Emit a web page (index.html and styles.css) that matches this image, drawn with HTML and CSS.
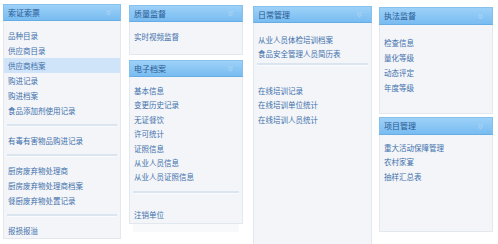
FILE: index.html
```html
<!DOCTYPE html>
<html lang="zh-CN">
<head>
<meta charset="utf-8">
<title>菜单</title>
<link rel="stylesheet" href="styles.css">
</head>
<body>
<div class="board">
  <div class="col c1">
    <section class="panel">
      <div class="hd"><span class="title">索证索票</span><svg class="chev" viewBox="0 0 8 8"><path d="M1.5 1.5L4 3.5L6.5 1.5M1.5 4.5L4 6.5L6.5 4.5"/></svg></div>
      <div class="bd bd1">
        <div class="grp g1">
          <div class="item">品种目录</div>
          <div class="item">供应商目录</div>
          <div class="item active">供应商档案</div>
          <div class="item">购进记录</div>
          <div class="item">购进档案</div>
          <div class="item">食品添加剂使用记录</div>
        </div>
        <div class="sep"></div>
        <div class="grp">
          <div class="item">有毒有害物品购进记录</div>
        </div>
        <div class="sep"></div>
        <div class="grp">
          <div class="item">厨房废弃物处理商</div>
          <div class="item">厨房废弃物处理商档案</div>
          <div class="item">餐厨废弃物处置记录</div>
        </div>
        <div class="sep"></div>
        <div class="grp glast">
          <div class="item">报损报溢</div>
        </div>
      </div>
    </section>
  </div>

  <div class="col c2">
    <section class="panel">
      <div class="hd"><span class="title">质量监督</span><svg class="chev" viewBox="0 0 8 8"><path d="M1.5 1.5L4 3.5L6.5 1.5M1.5 4.5L4 6.5L6.5 4.5"/></svg></div>
      <div class="bd bd2a">
        <div class="grp g1">
          <div class="item">实时视频监督</div>
        </div>
      </div>
    </section>
    <section class="panel panel-next">
      <div class="hd"><span class="title">电子档案</span><svg class="chev" viewBox="0 0 8 8"><path d="M1.5 1.5L4 3.5L6.5 1.5M1.5 4.5L4 6.5L6.5 4.5"/></svg></div>
      <div class="bd bd2b">
        <div class="grp g1 tight">
          <div class="item">基本信息</div>
          <div class="item">变更历史记录</div>
          <div class="item">无证餐饮</div>
          <div class="item">许可统计</div>
          <div class="item">证照信息</div>
          <div class="item">从业人员信息</div>
          <div class="item">从业人员证照信息</div>
        </div>
        <div class="sep"></div>
        <div class="grp gspace tight">
          <div class="item">注销单位</div>
        </div>
      </div>
      <div class="ft"></div>
    </section>
  </div>

  <div class="col c3">
    <section class="panel">
      <div class="hd"><span class="title">日常管理</span><svg class="chev" viewBox="0 0 8 8"><path d="M1.5 1.5L4 3.5L6.5 1.5M1.5 4.5L4 6.5L6.5 4.5"/></svg></div>
      <div class="bd bd3">
        <div class="grp g3 tight">
          <div class="item">从业人员体检培训档案</div>
          <div class="item">食品安全管理人员简历表</div>
        </div>
        <div class="sep"></div>
        <div class="grp gspace2 tight">
          <div class="item">在线培训记录</div>
          <div class="item">在线培训单位统计</div>
          <div class="item">在线培训人员统计</div>
        </div>
      </div>
    </section>
  </div>

  <div class="col c4">
    <section class="panel">
      <div class="hd hd4"><span class="title">执法监督</span><svg class="chev" viewBox="0 0 8 8"><path d="M1.5 1.5L4 3.5L6.5 1.5M1.5 4.5L4 6.5L6.5 4.5"/></svg></div>
      <div class="bd bd4a">
        <div class="grp g4">
          <div class="item">检查信息</div>
          <div class="item">量化等级</div>
          <div class="item">动态评定</div>
          <div class="item">年度等级</div>
        </div>
      </div>
    </section>
    <section class="panel panel-next4">
      <div class="hd hd4"><span class="title">项目管理</span><svg class="chev" viewBox="0 0 8 8"><path d="M1.5 1.5L4 3.5L6.5 1.5M1.5 4.5L4 6.5L6.5 4.5"/></svg></div>
      <div class="bd bd4b">
        <div class="grp g4b tight">
          <div class="item">重大活动保障管理</div>
          <div class="item">农村家宴</div>
          <div class="item">抽样汇总表</div>
        </div>
      </div>
    </section>
  </div>
</div>
</body>
</html>
```

FILE: styles.css
```css
html, body {
  margin: 0;
  padding: 0;
  background: #ffffff;
  overflow: hidden;
}

body {
  font-family: "Noto Sans CJK SC", "Noto Sans", sans-serif;
  width: 498px;
  height: 244px;
}

.board {
  display: flex;
  align-items: flex-start;
  padding-left: 3px;
}

.col {
  display: flex;
  flex-direction: column;
}

.c1 { width: 118px; padding-top: 4px; }
.c2 { width: 114px; margin-left: 8px; padding-top: 5px; }
.c3 { width: 119px; margin-left: 10px; padding-top: 6px; }
.c4 { width: 114px; margin-left: 7px; padding-top: 7px; }

.hd {
  height: 17px;
  box-sizing: border-box;
  display: flex;
  align-items: center;
  justify-content: space-between;
  padding: 0 8px 0 4px;
  background: linear-gradient(#9dd1f8, #78bcf1);
  border: 1px solid #86c1ee;
  border-bottom-color: #66ade6;
  color: #2a5890;
  font-size: 8px;
}

.hd4 { height: 18px; }

.title {
  line-height: 1;
}

.chev {
  width: 7px;
  height: 7px;
  fill: none;
  stroke: #b9d8f1;
  stroke-width: 1;
}

.bd {
  background: #f3f5f8;
  border: 1px solid #e3e8ef;
  border-top: none;
  box-sizing: border-box;
}

.bd1 { height: 218px; }
.bd2a { height: 33px; }
.bd2b { height: 147px; }
.bd3 { height: 230px; }
.bd4a { height: 89px; }
.bd4b { height: 97px; }

.panel-next { margin-top: 5px; }
.panel-next4 { margin-top: 3px; }

.ft {
  height: 8px;
  background: #f8f9fa;
  margin: 0 4px;
}

.grp {
  padding: 6px 0;
}

.g1 { padding-top: 7px; }
.g3 { padding-top: 10px; padding-bottom: 1px; }
.g4 { padding-top: 10px; }
.g4b { padding-top: 6px; }
.gspace { padding-top: 14px; }
.gspace2 { padding-top: 18px; }

.item {
  height: 15px;
  line-height: 15px;
  padding-left: 4px;
  font-size: 7.5px;
  color: #4170ac;
  white-space: nowrap;
}

.tight .item {
  height: 14.4px;
  line-height: 14.4px;
}

.item.active {
  background: #cfe4f8;
}

.sep {
  height: 2px;
  margin: 0 3px;
  background: #dbe5ef;
  border-bottom: 1px solid #f9fbfd;
}
```
